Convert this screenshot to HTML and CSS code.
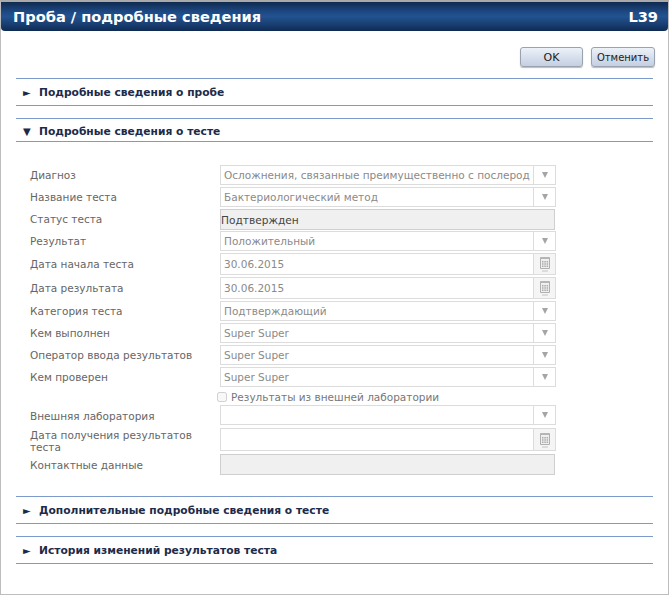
FILE: index.html
```html
<!DOCTYPE html>
<html lang="ru">
<head>
    <meta charset="UTF-8">
    <title>Проба / подробные сведения</title>
    <link rel="stylesheet" href="styles.css">
</head>
<body>
<div class="window">
    <div class="titlebar">
        <span>Проба / подробные сведения</span>
        <span>L39</span>
    </div>
    <div class="content">
        <div class="actions">
            <button class="btn btn-ok">OK</button>
            <button class="btn btn-cancel">Отменить</button>
        </div>

        <div class="section"><span class="arrow">&#9658;</span>Подробные сведения о пробе</div>

        <div class="section section-open"><span class="arrow">&#9660;</span>Подробные сведения о тесте</div>

        <div class="form">
            <div class="row h20"><label>Диагноз</label>
                <div class="field"><span class="value">Осложнения, связанные преимущественно с послерод</span><span class="side"><i class="caret"></i></span></div></div>
            <div class="row h20"><label>Название теста</label>
                <div class="field"><span class="value">Бактериологический метод</span><span class="side"><i class="caret"></i></span></div></div>
            <div class="row h21"><label>Статус теста</label>
                <div class="field static dark"><span class="value">Подтвержден</span></div></div>
            <div class="row h20"><label>Результат</label>
                <div class="field"><span class="value">Положительный</span><span class="side"><i class="caret"></i></span></div></div>
            <div class="row h22"><label>Дата начала теста</label>
                <div class="field"><span class="value">30.06.2015</span><span class="side shaded">
                    <svg class="cal" viewBox="0 0 12 16"><path d="M1.5 1.5h9v11h-9z" fill="#f0f0f0" stroke="#b0b0b0"/><path d="M2 1h8v2H2z" fill="#b5b5b5"/><path d="M3 5h1.5v1.5H3zM5.3 5h1.5v1.5H5.3zM7.6 5h1.5v1.5H7.6zM3 7.3h1.5v1.5H3zM5.3 7.3h1.5v1.5H5.3zM7.6 7.3h1.5v1.5H7.6zM3 9.6h1.5v1.5H3zM5.3 9.6h1.5v1.5H5.3zM7.6 9.6h1.5v1.5H7.6z" fill="#aaa"/><path d="M3 15h6" stroke="#c4c4c4"/></svg></span></div></div>
            <div class="row h22"><label>Дата результата</label>
                <div class="field"><span class="value">30.06.2015</span><span class="side shaded">
                    <svg class="cal" viewBox="0 0 12 16"><path d="M1.5 1.5h9v11h-9z" fill="#f0f0f0" stroke="#b0b0b0"/><path d="M2 1h8v2H2z" fill="#b5b5b5"/><path d="M3 5h1.5v1.5H3zM5.3 5h1.5v1.5H5.3zM7.6 5h1.5v1.5H7.6zM3 7.3h1.5v1.5H3zM5.3 7.3h1.5v1.5H5.3zM7.6 7.3h1.5v1.5H7.6zM3 9.6h1.5v1.5H3zM5.3 9.6h1.5v1.5H5.3zM7.6 9.6h1.5v1.5H7.6z" fill="#aaa"/><path d="M3 15h6" stroke="#c4c4c4"/></svg></span></div></div>
            <div class="row h20"><label>Категория теста</label>
                <div class="field"><span class="value">Подтверждающий</span><span class="side"><i class="caret"></i></span></div></div>
            <div class="row h20"><label>Кем выполнен</label>
                <div class="field"><span class="value">Super Super</span><span class="side"><i class="caret"></i></span></div></div>
            <div class="row h20"><label>Оператор ввода результатов</label>
                <div class="field"><span class="value">Super Super</span><span class="side"><i class="caret"></i></span></div></div>
            <div class="row h20"><label>Кем проверен</label>
                <div class="field"><span class="value">Super Super</span><span class="side"><i class="caret"></i></span></div></div>
            <div class="check-row"><input type="checkbox" disabled><span>Результаты из внешней лаборатории</span></div>
            <div class="row h20 gap3 nudge"><label>Внешняя лаборатория</label>
                <div class="field"><span class="value"></span><span class="side"><i class="caret"></i></span></div></div>
            <div class="row h23 gap3 two-lines"><label>Дата получения результатов теста</label>
                <div class="field"><span class="value"></span><span class="side shaded">
                    <svg class="cal" viewBox="0 0 12 16"><path d="M1.5 1.5h9v11h-9z" fill="#f0f0f0" stroke="#b0b0b0"/><path d="M2 1h8v2H2z" fill="#b5b5b5"/><path d="M3 5h1.5v1.5H3zM5.3 5h1.5v1.5H5.3zM7.6 5h1.5v1.5H7.6zM3 7.3h1.5v1.5H3zM5.3 7.3h1.5v1.5H5.3zM7.6 7.3h1.5v1.5H7.6zM3 9.6h1.5v1.5H3zM5.3 9.6h1.5v1.5H5.3zM7.6 9.6h1.5v1.5H7.6z" fill="#aaa"/><path d="M3 15h6" stroke="#c4c4c4"/></svg></span></div></div>
            <div class="row h21 nudge"><label>Контактные данные</label>
                <div class="field static"></div></div>
        </div>

        <div class="section"><span class="arrow">&#9658;</span>Дополнительные подробные сведения о тесте</div>

        <div class="section"><span class="arrow">&#9658;</span>История изменений результатов теста</div>
    </div>
</div>
</body>
</html>
```

FILE: styles.css
```css
html, body {
    margin: 0;
    padding: 0;
}
body {
    width: 669px;
    height: 595px;
    overflow: hidden;
    background: #fff;
    font-family: "DejaVu Sans", Verdana, sans-serif;
    font-size: 10.5px;
    color: #666;
}
.window {
    box-sizing: border-box;
    height: 595px;
    border: 1px solid #bdbdbd;
    border-top: 2px solid #a9a9a9;
}
.titlebar {
    height: 29px;
    box-sizing: border-box;
    display: flex;
    justify-content: space-between;
    align-items: center;
    padding: 0 10px 0 12px;
    background: linear-gradient(#0f2a50 0%, #1d4a84 35%, #22528f 50%, #1a4074 75%, #0e2a52 100%);
    border-radius: 0 0 4px 4px;
    color: #fff;
    font-size: 14.6px;
    font-weight: bold;
}
.content {
    padding: 0 15px;
}
.actions {
    display: flex;
    justify-content: flex-end;
    gap: 8px;
    padding: 16px 0 0;
    margin-right: -2px;
    height: 31px;
}
.btn {
    height: 20px;
    padding: 0;
    border: 1px solid #9aa3ad;
    border-radius: 3px;
    background: linear-gradient(#eef2f8 0%, #d5deec 55%, #c3cfe2 100%);
    box-shadow: 0 1px 1px #bbb;
    font-family: "DejaVu Sans", Verdana, sans-serif;
    font-size: 10px;
    color: #222;
}
.btn-ok {
    width: 63px;
    font-size: 11px;
}
.btn-cancel {
    width: 64px;
}
.section {
    height: 26px;
    line-height: 27px;
    border-top: 1px solid #7c9acb;
    border-bottom: 1px solid #7c9acb;
    margin-bottom: 12px;
    padding-left: 7px;
    font-size: 10.7px;
    font-weight: bold;
    color: #1c2b4a;
}
.section-open {
    height: 22px;
    line-height: 25px;
    margin-bottom: 0;
}
.arrow {
    display: inline-block;
    width: 16px;
    font-size: 10px;
    font-weight: normal;
}
.form {
    padding: 23px 0 20px 14px;
}
.row {
    display: grid;
    grid-template-columns: 190px 336px;
    grid-template-rows: 100%;
    margin-bottom: 2px;
}
.row label {
    align-self: center;
    line-height: 13px;
}
.two-lines label {
    line-height: 12px;
    padding-top: 2px;
}
.nudge label {
    padding-top: 2px;
}
.h20 {
    height: 20px;
}
.h21 {
    height: 21px;
    margin-bottom: 1px;
}
.h22 {
    height: 22px;
}
.h23 {
    height: 23px;
}
.gap3 {
    margin-bottom: 3px;
}
.field {
    box-sizing: border-box;
    display: flex;
    border: 1px solid #dcdcdc;
    background: #fff;
    height: 100%;
}
.value {
    flex: 1;
    min-width: 0;
    overflow: hidden;
    white-space: nowrap;
    padding-left: 3px;
    align-self: center;
    color: #8a8a8a;
}
.side {
    flex: none;
    width: 21px;
    border-left: 1px solid #dcdcdc;
    display: flex;
    align-items: center;
    justify-content: center;
}
.shaded {
    background: #f5f5f5;
}
.caret {
    display: block;
    width: 0;
    height: 0;
    border-left: 3.5px solid transparent;
    border-right: 3.5px solid transparent;
    border-top: 6px solid #a5a5a5;
}
.cal {
    width: 12px;
    height: 16px;
}
.static {
    width: 335px;
    background: #f0f0f0;
    border-color: #cfcfcf;
}
.dark .value {
    color: #444;
    font-size: 10.6px;
    padding-left: 0;
}
.check-row {
    height: 16px;
    margin-left: 187px;
    display: flex;
    align-items: center;
    color: #777;
}
.check-row input {
    margin: 0 4px 0 0;
    width: 10px;
    height: 10px;
}
```
